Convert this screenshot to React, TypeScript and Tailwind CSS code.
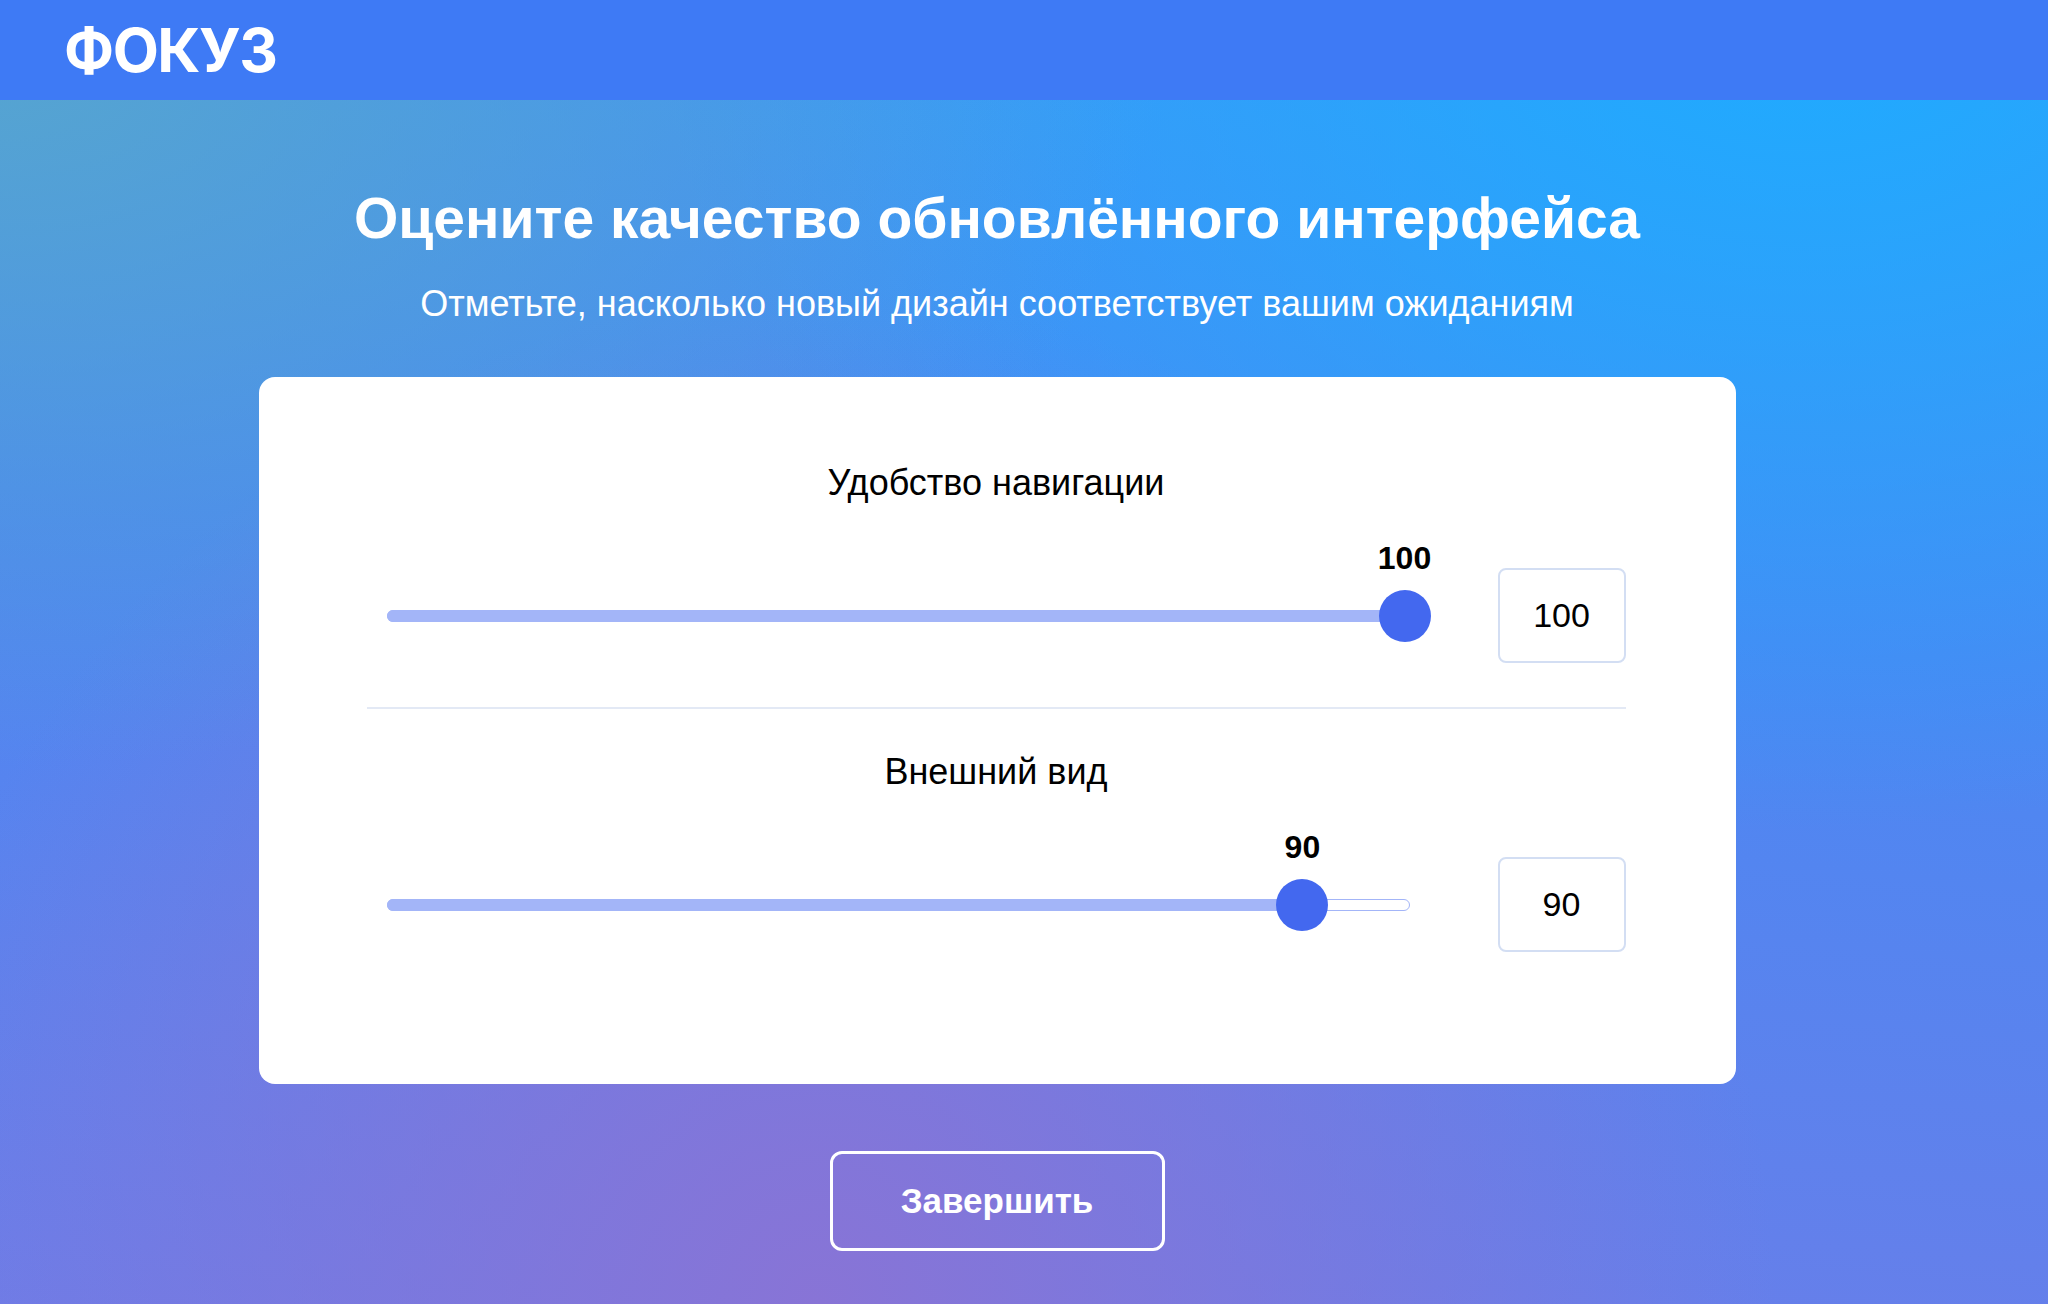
import React from 'react';

interface RatingRowProps {
  label: string;
  value: number;
}

const RatingRow: React.FC<RatingRowProps> = ({ label, value }) => {
  return (
    <div className="flex flex-col items-center">
      <div className="text-[36px] leading-[40px] text-black">{label}</div>

      <div className="mt-[65px] flex w-full items-center gap-[68px]">
        {/* Slider */}
        <div className="flex-1 px-5">
          <div className="relative h-[12px] rounded-full border border-[#a3b5f8] bg-white">
            <div
              className="absolute -top-px -left-px h-[12px] rounded-full bg-[#a3b5f8]"
              style={{ width: `${value}%` }}
            />
            <div
              className="absolute top-1/2 h-[52px] w-[52px] -translate-x-1/2 -translate-y-1/2 rounded-full bg-[#4368ef]"
              style={{ left: `calc(${value}% - 4px)` }}
            >
              <span className="absolute bottom-full left-1/2 mb-[14px] -translate-x-1/2 text-[32px] leading-[36px] font-bold text-black">
                {value}
              </span>
            </div>
          </div>
        </div>

        {/* Value box */}
        <div className="flex h-[95px] w-[128px] items-center justify-center rounded-[8px] border-2 border-[#d3def3] text-[34px] text-black">
          {value}
        </div>
      </div>
    </div>
  );
};

export default function App() {
  return (
    <div className="min-h-screen w-full bg-[radial-gradient(ellipse_at_0%_5%,rgba(88,166,204,0.9)_0%,rgba(88,166,204,0)_40%),radial-gradient(ellipse_at_88%_0%,#1eabff_0%,rgba(30,171,255,0)_45%),radial-gradient(ellipse_at_40%_100%,#8874d6_0%,rgba(136,116,214,0)_55%),linear-gradient(185deg,#3d9af6_0%,#4a88f3_45%,#6c7de8_100%)] font-['Liberation_Sans',Arial,sans-serif]">
      {/* Header */}
      <header className="flex h-[100px] items-center bg-[#3e7af5] px-[64px]">
        <span className="font-['Inter',sans-serif] text-[60px] leading-none font-bold tracking-tight text-white">
          ФОКУЗ
        </span>
      </header>

      <main className="flex flex-col items-center pr-[54px] pb-[52px]">
        <h1 className="mt-[86px] text-[57px] leading-[64px] font-bold text-white">
          Оцените качество обновлённого интерфейса
        </h1>
        <p className="mt-[34px] text-[36px] leading-[40px] text-white">
          Отметьте, насколько новый дизайн соответствует вашим ожиданиям
        </p>

        {/* Card */}
        <section className="mt-[53px] w-[1477px] rounded-[16px] bg-white pt-[86px] pr-[110px] pb-[132px] pl-[108px]">
          <RatingRow label="Удобство навигации" value={100} />
          <div className="mt-[44px] mb-[43px] h-[2px] bg-[#e3e9f5]" />
          <RatingRow label="Внешний вид" value={90} />
        </section>

        <button className="mt-[67px] h-[100px] w-[335px] rounded-[12px] border-[3px] border-white text-[35px] font-bold text-white">
          Завершить
        </button>
      </main>
    </div>
  );
}
